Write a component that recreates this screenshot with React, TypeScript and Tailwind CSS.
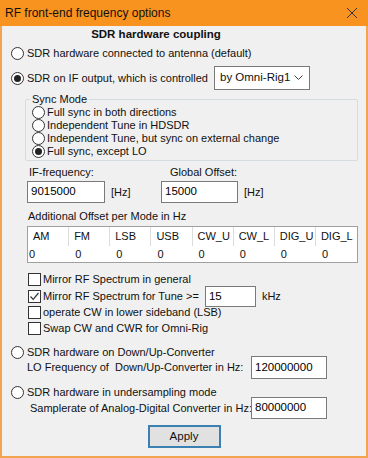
import React from "react";

const font = { fontFamily: '"Liberation Sans", Arial, sans-serif' };

function Radio({ checked }: { checked?: boolean }) {
  return (
    <span className="w-[13px] h-[13px] rounded-full border border-[#333] bg-white flex items-center justify-center shrink-0">
      {checked && <span className="w-[7px] h-[7px] rounded-full bg-[#222]" />}
    </span>
  );
}

function Check({ checked }: { checked?: boolean }) {
  return (
    <span className="w-[13px] h-[13px] border border-[#333] bg-white flex items-center justify-center shrink-0">
      {checked && (
        <svg width="11" height="11" viewBox="0 0 11 11">
          <path d="M1.5 5.5 L4.2 8.3 L9.5 2" fill="none" stroke="#333" strokeWidth="1.2" />
        </svg>
      )}
    </span>
  );
}

function Input({ value, w, h = 22 }: { value: string; w: number; h?: number }) {
  return (
    <div
      className="bg-white border border-[#7a7a7a] flex items-center pl-[3px] text-[11.5px] text-black shrink-0 whitespace-nowrap"
      style={{ width: w, height: h }}
    >
      {value}
    </div>
  );
}

export default function App() {
  const cols = ["AM", "FM", "LSB", "USB", "CW_U", "CW_L", "DIG_U", "DIG_L"];
  return (
    <div className="w-[368px] h-[458px] bg-[#f2a54e] flex flex-col text-[11px] text-[#111] leading-none whitespace-nowrap overflow-hidden" style={font}>
      <div className="h-[26px] bg-[#f8931f] flex items-center justify-between pl-[5px] pr-[10px] shrink-0">
        <span className="text-[12px] text-[#111]">RF front-end frequency options</span>
        <svg width="12" height="12" viewBox="0 0 12 12">
          <path d="M1 1 L11 11 M11 1 L1 11" stroke="#333" strokeWidth="1" fill="none" />
        </svg>
      </div>
      <div className="flex-1 mx-[2px] mb-[2px] bg-[#f0f0f0] flex flex-col pl-[9px] relative">
        <div className="h-[16px] mt-[1px] flex items-center justify-center font-bold text-[11.5px] pr-[65px]">
          SDR hardware coupling
        </div>
        <div className="h-[16px] mt-[2px] flex items-center gap-[3px]">
          <Radio />
          <span>SDR hardware connected to antenna (default)</span>
        </div>
        <div className="h-[24px] mt-[5px] flex items-center">
          <Radio checked />
          <span className="ml-[3px]">SDR on IF output, which is controlled</span>
          <div className="ml-auto mr-[56px] w-[96px] h-[24px] bg-white border border-[#7a7a7a] flex items-center pl-[5px] pr-[6px] justify-between">
            <span className="text-[11.5px]">by Omni-Rig1</span>
            <svg width="9" height="6" viewBox="0 0 9 6">
              <path d="M0.5 0.5 L4.5 4.5 L8.5 0.5" stroke="#444" strokeWidth="1" fill="none" />
            </svg>
          </div>
        </div>
        <div className="relative ml-[14px] mr-[8px] mt-[9px] h-[62px] border border-[#d5dcdf] rounded-[2px] flex flex-col pt-[6px] pl-[6px]">
          <span className="absolute -top-[7px] left-[4px] bg-[#f0f0f0] px-[2px] leading-[13px]">Sync Mode</span>
          {[
            "Full sync in both directions",
            "Independent Tune in HDSDR",
            "Independent Tune, but sync on external change",
            "Full sync, except LO",
          ].map((t, i) => (
            <div key={t} className="h-[13px] flex items-center gap-[2px]">
              <Radio checked={i === 3} />
              <span>{t}</span>
            </div>
          ))}
        </div>
        <div className="flex mt-[4px] h-[14px] items-center">
          <span className="ml-[18px] w-[141px]">IF-frequency:</span>
          <span>Global Offset:</span>
        </div>
        <div className="flex mt-[2px] items-center ml-[16px]">
          <Input value="9015000" w={78} />
          <span className="ml-[6px] w-[50px]">[Hz]</span>
          <Input value="15000" w={77} />
          <span className="ml-[6px]">[Hz]</span>
        </div>
        <div className="mt-[6px] h-[14px] flex items-center ml-[17px]">Additional Offset per Mode in Hz</div>
        <div className="ml-[16px] mr-[8px] mt-[3px] border border-[#a0a0a0] bg-white">
          <div className="grid grid-cols-8 h-[19px]">
            {cols.map((c) => (
              <div key={c} className="border-r border-[#dcdcdc] last:border-r-0 flex items-center pl-[5px]">
                {c}
              </div>
            ))}
          </div>
          <div className="grid grid-cols-8 h-[16px]">
            {cols.map((c, i) => (
              <div key={c} className={`flex items-center ${i === 0 ? "pl-[1px]" : "pl-[6px]"}`}>
                0
              </div>
            ))}
          </div>
        </div>
        <div className="ml-[17px] mt-[9px] h-[14px] flex items-center gap-[2px]">
          <Check />
          <span>Mirror RF Spectrum in general</span>
        </div>
        <div className="ml-[17px] h-[21px] flex items-center gap-[2px]">
          <Check checked />
          <span>Mirror RF Spectrum for Tune &gt;=</span>
          <div className="ml-[4px]">
            <Input value="15" w={51} h={21} />
          </div>
          <span className="ml-[4px]">kHz</span>
        </div>
        <div className="ml-[17px] -mt-[2px] h-[14px] flex items-center gap-[2px]">
          <Check />
          <span>operate CW in lower sideband (LSB)</span>
        </div>
        <div className="ml-[17px] mt-[2px] h-[14px] flex items-center gap-[2px]">
          <Check />
          <span>Swap CW and CWR for Omni-Rig</span>
        </div>
        <div className="mt-[10px] h-[14px] flex items-center gap-[3px]">
          <Radio />
          <span>SDR hardware on Down/Up-Converter</span>
        </div>
        <div className="flex items-center h-[23px] -mt-[3px]">
          <span className="ml-[16px] w-[224px] whitespace-pre">LO Frequency of  Down/Up-Converter in Hz:</span>
          <Input value="120000000" w={76} h={23} />
        </div>
        <div className="mt-[6px] h-[14px] flex items-center gap-[3px]">
          <Radio />
          <span>SDR hardware in undersampling mode</span>
        </div>
        <div className="flex items-center h-[22px] -mt-[2px]">
          <span className="ml-[19px] w-[221px]">Samplerate of Analog-Digital Converter in Hz:</span>
          <Input value="80000000" w={76} h={22} />
        </div>
        <div className="flex justify-center mt-[6px] pr-[9px]">
          <div className="w-[73px] h-[23px] border-[2px] border-[#3c7fb1] bg-[#e1e1e1] flex items-center justify-center text-[11.5px]">
            Apply
          </div>
        </div>
      </div>
    </div>
  );
}
